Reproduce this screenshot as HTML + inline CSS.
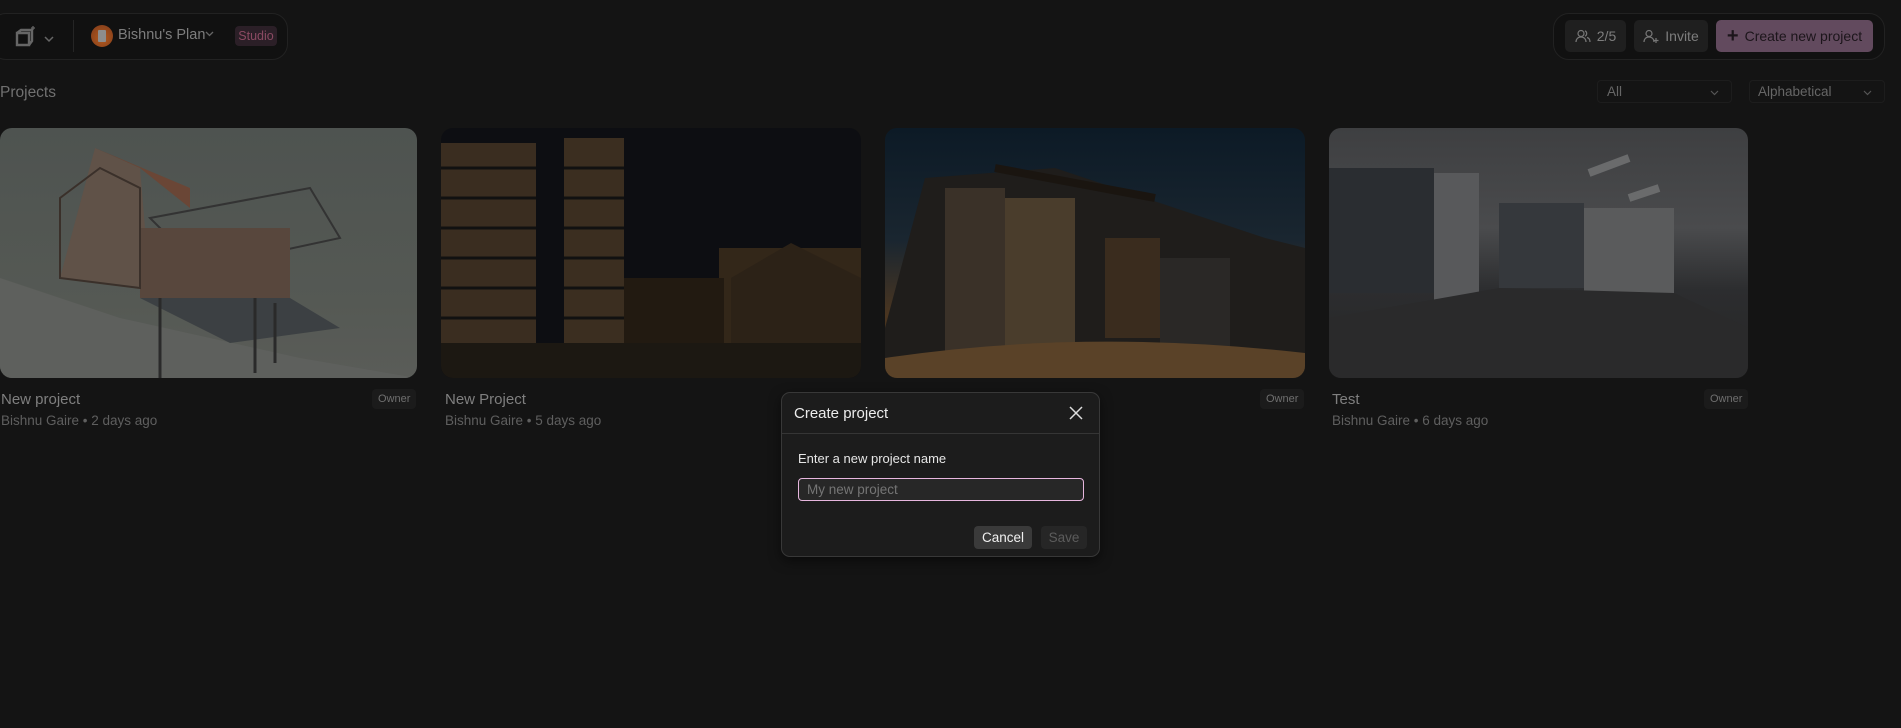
<!DOCTYPE html>
<html><head><meta charset="utf-8"><style>
*{box-sizing:border-box;margin:0;padding:0}
body{width:1901px;height:728px;background:#141414;font-family:"Liberation Sans",sans-serif;position:relative;overflow:hidden;color:#8a8a8a}
.a{position:absolute}
.bar{background:#111;border:1px solid #222;border-radius:16px}
.btn{background:#1f1f1f;border-radius:5px;color:#7d7d7d;font-size:14px;display:flex;align-items:center;justify-content:center;gap:6px}
.img{border-radius:12px;overflow:hidden}
.t{font-size:15px;color:#7f7f7f}
.s{font-size:13.5px;color:#5f5f5f}
.own{background:#1b1b1b;border-radius:4px;font-size:11px;color:#6f6f6f;padding:4px 6px}
</style></head><body>
<div class="a bar" style="left:-10px;top:13px;width:298px;height:47px"></div>
<svg class="a" style="left:14px;top:24px" width="40" height="24" viewBox="0 0 40 24"><path d="M3 9h12v12H3z M3 9l4-3h11v11l-3 4" fill="none" stroke="#666" stroke-width="2.4"/><path d="M19 2v4M17 4h4" stroke="#666" stroke-width="1.3"/><path d="M31 13l4 4 4-4" fill="none" stroke="#666" stroke-width="1.5"/></svg>
<div class="a" style="left:73px;top:20px;width:1px;height:32px;background:#252525"></div>
<div class="a" style="left:91px;top:25px;width:22px;height:22px;border-radius:50%;background:radial-gradient(circle at 50% 60%,#b25a1f,#7e3a1a)"></div>
<div class="a" style="left:98px;top:30px;width:8px;height:12px;background:#8d8d8d;border-radius:1px"></div>
<div class="a" style="left:118px;top:27px;font-size:14.5px;color:#7d7d7d">Bishnu's Plan</div>
<svg class="a" style="left:205px;top:31px" width="9" height="6"><path d="M1 1l3.5 3.5L8 1" fill="none" stroke="#666" stroke-width="1.3"/></svg>
<div class="a" style="left:235px;top:26px;width:42px;height:20px;background:#2b1f27;border-radius:4px;color:#8a4a62;font-size:12.5px;text-align:center;line-height:20px">Studio</div>
<div class="a" style="left:0;top:84px;font-size:15.5px;color:#707070">Projects</div>

<div class="a bar" style="left:1553px;top:13px;width:332px;height:47px"></div>
<div class="a btn" style="left:1565px;top:20px;width:61px;height:32px"><svg width="16" height="14"><circle cx="6" cy="4.5" r="3" fill="none" stroke="#777" stroke-width="1.2"/><path d="M1 13c0-3 2-5 5-5s5 2 5 5M10 1.8a3 3 0 010 5.4M12 8.5c2 .5 3 2.3 3 4.5" fill="none" stroke="#777" stroke-width="1.2"/></svg>2/5</div>
<div class="a btn" style="left:1634px;top:20px;width:74px;height:32px"><svg width="16" height="14"><circle cx="6" cy="4.5" r="3" fill="none" stroke="#777" stroke-width="1.2"/><path d="M1 13c0-3 2-5 5-5s5 2 5 5M13 9v5M10.5 11.5h5" fill="none" stroke="#777" stroke-width="1.2"/></svg>Invite</div>
<div class="a btn" style="left:1716px;top:20px;width:157px;height:32px;background:#624a5e;color:#1c151b;font-size:14px"><span style="font-size:20px;font-weight:bold;line-height:1">+</span>Create new project</div>
<div class="a" style="left:1597px;top:80px;width:135px;height:23px;border:1px solid #1d1d1d;border-radius:4px;font-size:13.5px;color:#666;padding:3px 9px">All<svg style="position:absolute;right:12px;top:9px" width="9" height="6"><path d="M1 1l3.5 3.5L8 1" fill="none" stroke="#555" stroke-width="1.2"/></svg></div>
<div class="a" style="left:1749px;top:80px;width:136px;height:23px;border:1px solid #1d1d1d;border-radius:4px;font-size:13.5px;color:#666;padding:3px 8px">Alphabetical<svg style="position:absolute;right:12px;top:9px" width="9" height="6"><path d="M1 1l3.5 3.5L8 1" fill="none" stroke="#555" stroke-width="1.2"/></svg></div>

<!-- card 1 -->
<div class="a img" style="left:0;top:128px;width:417px;height:250px;background:linear-gradient(180deg,#4e5350,#555954 70%,#5a5c58)">
<svg width="417" height="250"><path d="M0 150 L120 190 L300 230 L417 250 L0 250Z" fill="#5e605d"/><path d="M60 150 L95 20 L140 40 L150 160Z" fill="#605248"/><path d="M95 20 L190 60 L190 80 L140 40Z" fill="#6a4636"/><path d="M150 90 L310 60 L340 110 L200 140Z" fill="none" stroke="#333" stroke-width="2"/><rect x="140" y="100" width="150" height="70" fill="#58473d"/><path d="M140 170 L290 170 L340 200 L230 215Z" fill="#3c4043"/><path d="M160 170v85M255 170v75M275 175v60" stroke="#2a2a2a" stroke-width="3"/><path d="M60 70 L100 40 L140 60 L140 160 L60 150Z" fill="none" stroke="#3a302a" stroke-width="2"/></svg></div>
<div class="a t" style="left:1px;top:391px">New project</div>
<div class="a own" style="left:372px;top:389px">Owner</div>
<div class="a s" style="left:1px;top:413px">Bishnu Gaire • 2 days ago</div>

<!-- card 2 -->
<div class="a img" style="left:441px;top:128px;width:420px;height:250px;background:#0d0e12">
<svg width="420" height="250"><rect x="0" y="15" width="95" height="200" fill="#3a2d20"/><rect x="123" y="10" width="60" height="205" fill="#3b2e20"/><g stroke="#111" stroke-width="3"><path d="M0 40h95M0 70h95M0 100h95M0 130h95M0 160h95M0 190h95M123 40h60M123 70h60M123 100h60M123 130h60M123 160h60M123 190h60"/></g><rect x="278" y="120" width="142" height="95" fill="#332719"/><path d="M290 150 L350 115 L420 150 V215 H290Z" fill="#2c2217"/><rect x="183" y="150" width="100" height="65" fill="#221a11"/><rect x="0" y="215" width="420" height="35" fill="#1c1812"/></svg></div>
<div class="a t" style="left:445px;top:391px">New Project</div>
<div class="a s" style="left:445px;top:413px">Bishnu Gaire • 5 days ago</div>

<!-- card 3 -->
<div class="a img" style="left:885px;top:128px;width:420px;height:250px;background:linear-gradient(180deg,#0c1a26 0%,#1a2630 45%,#4a3520 75%,#3a2a18)">
<svg width="420" height="250"><path d="M40 50 L170 40 L380 110 L420 120 L420 250 L0 250 L0 200Z" fill="#1f1d1b"/><rect x="60" y="60" width="60" height="170" fill="#3a3128"/><rect x="120" y="70" width="70" height="160" fill="#4a3d2c"/><rect x="220" y="110" width="55" height="100" fill="#3a2c1e"/><rect x="275" y="130" width="70" height="100" fill="#2a2826"/><path d="M0 230 Q200 200 420 225 V250 H0Z" fill="#5a4228"/><path d="M110 40 L270 70" stroke="#1a1510" stroke-width="8"/></svg></div>
<div class="a own" style="left:1260px;top:389px">Owner</div>

<!-- card 4 -->
<div class="a img" style="left:1329px;top:128px;width:419px;height:250px;background:linear-gradient(180deg,#3e3f41 0%,#4a4b4d 40%,#2c2d2f 65%,#262626)">
<svg width="419" height="250"><rect x="0" y="40" width="105" height="125" fill="#2a2d31"/><rect x="105" y="45" width="45" height="145" fill="#58595b"/><rect x="170" y="75" width="85" height="85" fill="#35383c"/><rect x="255" y="80" width="90" height="90" fill="#5a5b5c"/><path d="M0 190 L170 160 L345 165 L419 200 V250 H0Z" fill="#2a2a2b"/><path d="M260 45l40-15M300 70l30-10" stroke="#6a6b6c" stroke-width="8"/></svg></div>
<div class="a t" style="left:1332px;top:391px">Test</div>
<div class="a own" style="left:1704px;top:389px">Owner</div>
<div class="a s" style="left:1332px;top:413px">Bishnu Gaire • 6 days ago</div>

<!-- modal -->
<div class="a" style="left:781px;top:392px;width:319px;height:165px;background:#1c1c1c;border:1px solid #383838;border-radius:9px;box-shadow:0 4px 12px rgba(0,0,0,.5)">
<div style="height:41px;border-bottom:1px solid #353535;position:relative">
<div class="a" style="left:12px;top:12px;font-size:15px;color:#ececec">Create project</div>
<svg class="a" style="left:287px;top:13px" width="14" height="14"><path d="M1 1l12 12M13 1L1 13" stroke="#ddd" stroke-width="1.5"/></svg>
</div>
<div class="a" style="left:16px;top:58px;font-size:13px;color:#e6e6e6">Enter a new project name</div>
<div class="a" style="left:16px;top:85px;width:286px;height:23px;border:1px solid #e7b6de;border-radius:4px;background:#272727;font-size:13.5px;color:#757575;padding:3px 8px">My new project</div>
<div class="a" style="left:192px;top:133px;width:58px;height:23px;background:#3a3a3a;border-radius:4px;font-size:13.5px;color:#f0f0f0;text-align:center;line-height:23px">Cancel</div>
<div class="a" style="left:259px;top:133px;width:46px;height:23px;background:#262626;border-radius:4px;font-size:13.5px;color:#5c5c5c;text-align:center;line-height:23px">Save</div>
</div>
</body></html>
